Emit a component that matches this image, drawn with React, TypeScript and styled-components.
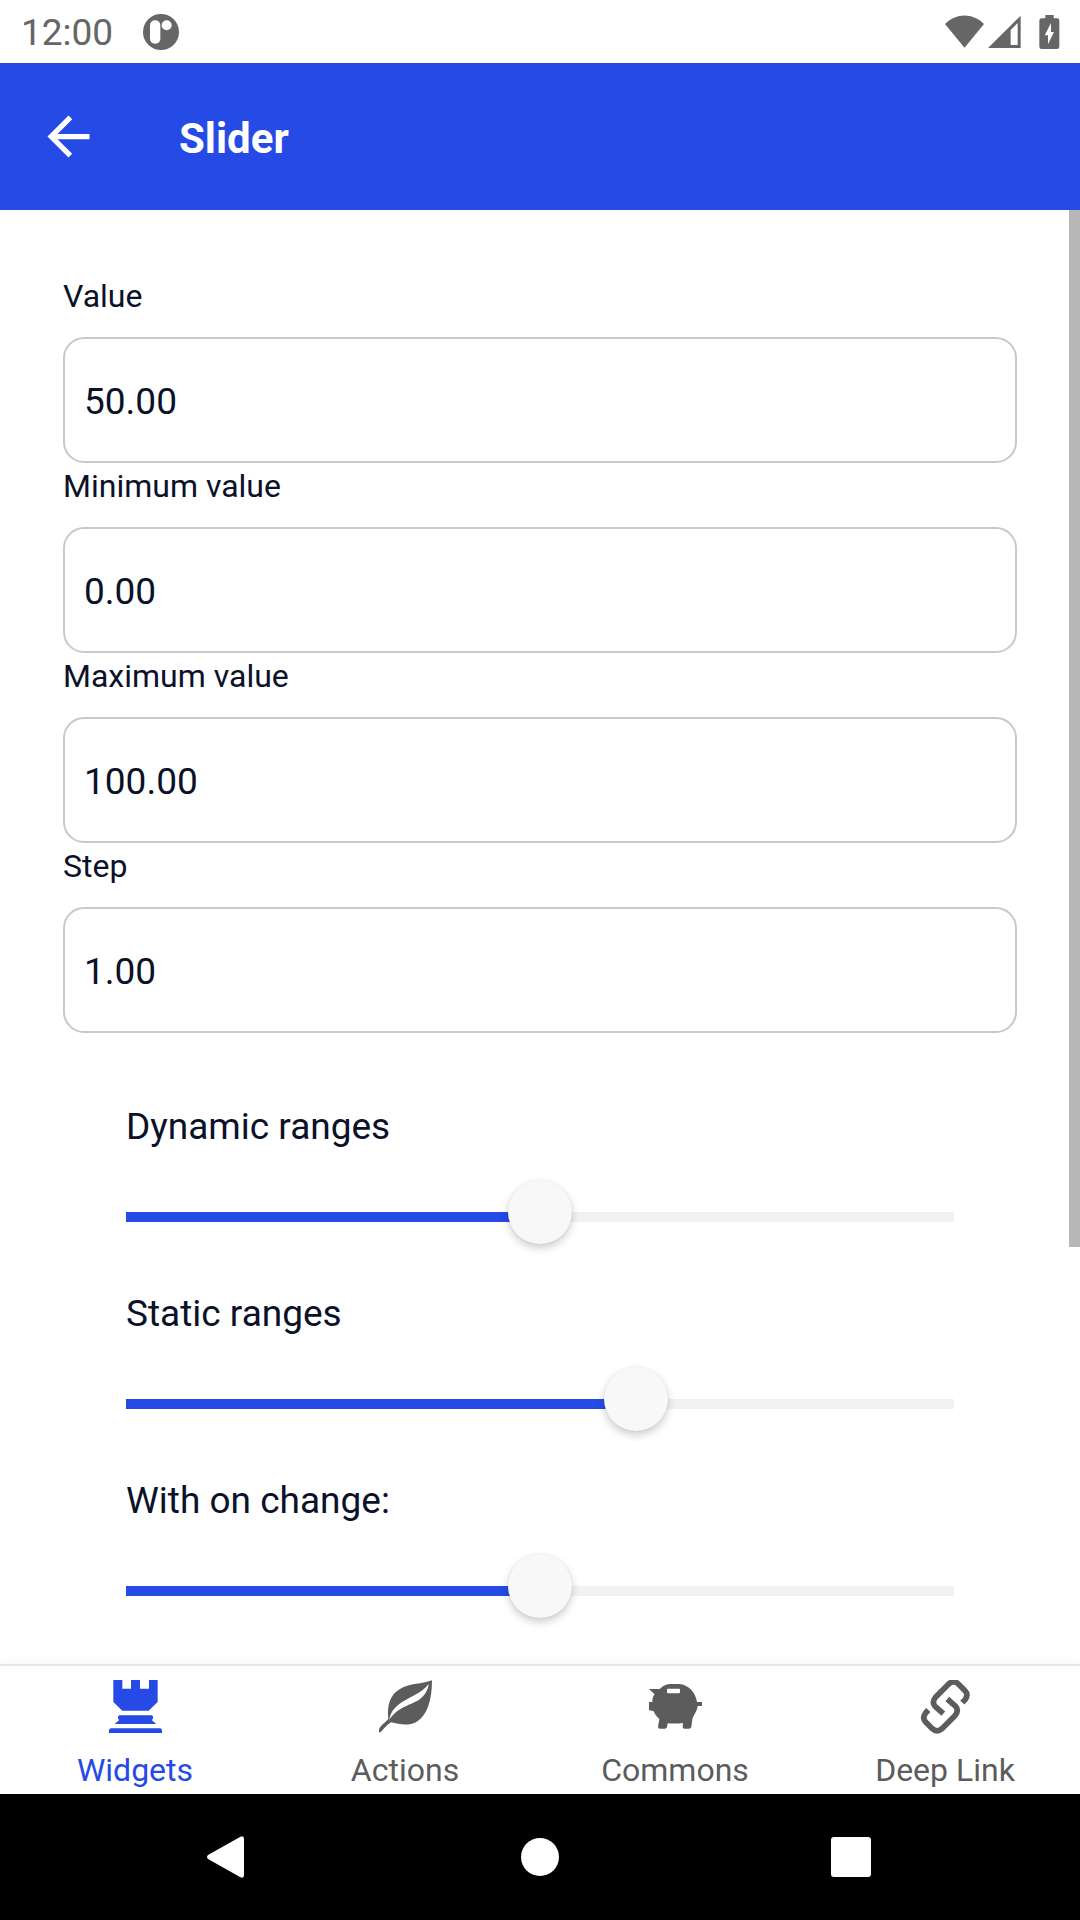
import React, { useState } from "react";
import styled, { createGlobalStyle } from "styled-components";

const blue = "#254ae6";
const ink = "#0a1128";
const grey = "#5c5c5c";

const GlobalStyle = createGlobalStyle`
  * { box-sizing: border-box; }
  body {
    margin: 0;
    background: #fff;
    color: ${ink};
    font-family: Roboto, "Noto Sans", sans-serif;
  }
  button, input { font: inherit; color: inherit; }
  button { border: 0; padding: 0; background: none; cursor: pointer; }
  svg { display: block; }
`;

const Screen = styled.div`
  display: flex;
  flex-direction: column;
  min-height: 100vh;
`;

const StatusBar = styled.div`
  display: flex;
  align-items: center;
  height: 63px;
  padding: 0 20px 0 21px;
  color: #666;
`;

const Clock = styled.time`
  flex: none;
  margin-right: 30px;
  padding-top: 2px;
  font-size: 37px;
  line-height: 44px;
`;

const StatusIcons = styled.div`
  display: flex;
  align-items: center;
  margin-left: auto;
  gap: 4px;
`;

const BatterySlot = styled.span`
  margin-left: 14px;
`;

const Header = styled.header`
  display: flex;
  align-items: center;
  gap: 79px;
  height: 147px;
  padding: 0 37px;
  background: ${blue};
  color: #fff;
`;

const Title = styled.h1`
  margin: 0;
  padding-top: 4px;
  font-size: 42px;
  line-height: 52px;
  font-weight: 700;
`;

const Content = styled.main`
  position: relative;
  flex: 1;
  padding: 63px 63px 32px;
`;

const ScrollThumb = styled.div`
  position: absolute;
  top: 0;
  right: 0;
  width: 11px;
  height: 71.3%;
  background: #b7b7b7;
`;

const FieldLabel = styled.label`
  display: block;
  margin-bottom: 18px;
  font-size: 32px;
  line-height: 46px;
`;

const FieldInput = styled.input`
  display: block;
  width: 100%;
  height: 126px;
  padding: 2px 19px 0;
  border: 2px solid #c9c9c9;
  border-radius: 21px;
  background: #fff;
  font-size: 37px;
  outline: none;
`;

const Sliders = styled.section`
  display: flex;
  flex-direction: column;
  gap: 69px;
  padding: 71px 63px 0;
`;

const SliderLabel = styled.label`
  display: block;
  margin-bottom: 62px;
  font-size: 37px;
  line-height: 46px;
`;

const Range = styled.input.attrs({ type: "range" })`
  display: block;
  appearance: none;
  width: 100%;
  height: 10px;
  margin: 0;
  background: #f2f2f2;
  outline: none;

  &::-webkit-slider-runnable-track {
    height: 10px;
  }

  &::-webkit-slider-thumb {
    appearance: none;
    width: 64px;
    height: 64px;
    margin-top: -32px;
    border-radius: 50%;
    background: #f8f8f8;
    box-shadow: 0 4px 8px rgba(0, 0, 0, 0.2), 0 0 2px rgba(0, 0, 0, 0.08);
  }
`;

const TabBar = styled.nav`
  display: grid;
  grid-template-columns: repeat(4, 1fr);
  height: 130px;
  border-top: 2px solid #e6e6e6;
  background: #fff;
  box-shadow: 0 -2px 10px rgba(0, 0, 0, 0.04);
`;

const Tab = styled.a<{ $active?: boolean }>`
  display: flex;
  flex-direction: column;
  align-items: center;
  gap: 15px;
  padding-top: 14px;
  color: ${(p) => (p.$active ? blue : grey)};
  font-size: 32px;
  line-height: 42px;
  text-decoration: none;
`;

const SystemNav = styled.div`
  display: flex;
  height: 126px;
  padding: 0 74px;
  background: #000;
  color: #fff;
`;

const SystemButton = styled.button`
  display: flex;
  flex: 1;
  align-items: center;
  justify-content: center;
`;

const AppBadge = () => (
  <svg width="36" height="36" viewBox="0 0 108 108" fill="currentColor" aria-hidden="true">
    <circle cx="54" cy="54" r="54" />
    <rect x="21" y="19" width="31" height="70" rx="15" fill="#fff" />
    <circle cx="71" cy="34" r="15" fill="#fff" />
  </svg>
);

const Wifi = () => (
  <svg width="39" height="34" viewBox="0 0 117 102" fill="currentColor" aria-hidden="true">
    <path d="M0 27C34-7 83-7 117 27L58.500 98Z" />
  </svg>
);

const Signal = () => (
  <svg width="33" height="34" viewBox="0 0 99 102" fill="currentColor" aria-hidden="true">
    <path fillRule="evenodd" d="M98 2V99H0ZM89 24L68 45V90H89Z" />
  </svg>
);

const Battery = () => (
  <svg width="21" height="34" viewBox="0 0 63 102" fill="currentColor" aria-hidden="true">
    <path
      fillRule="evenodd"
      d="M19 0H44V10H55Q61 10 61 17V95Q61 102 54 102H8Q1 102 1 95V17Q1 10 8 10H19ZM36 24L17 61H27V88L45 51H36Z"
    />
  </svg>
);

const BackArrow = () => (
  <svg width="63" height="63" viewBox="0 0 24 24" fill="currentColor" aria-hidden="true">
    <path d="M20 11H7.830l5.590-5.590L12 4l-8 8 8 8 1.410-1.410L7.830 13H20z" />
  </svg>
);

const TabIcon = ({ children }: { children: React.ReactNode }) => (
  <svg width="54" height="54" viewBox="0 0 162 162" fill="currentColor" aria-hidden="true">
    {children}
  </svg>
);

const rook = (
  <>
    <path d="M16 0H43V26H69V0H96V26H123V0H149V66L122 92H43L16 66Z" />
    <path d="M35 106H131Q135 106 135 111V116L131 120L145 132H20L34 120L30 116V111Q31 106 35 106Z" />
    <path d="M3 159V151Q4 145 9 145H156Q161 145 162 151V159Z" />
  </>
);

const leaf = (
  <path
    fillRule="evenodd"
    d="M162 1C120 14 96 10 66 27C38 42 26 74 31 117C23 127 4 139 3 149V157H8C16 148 28 133 39 127C65 133 90 139 115 126C147 108 162 62 162 1ZM152 12C151 25 144 43 127 56C103 75 61 78 34 119C37 103 41 91 61 74C90 51 129 43 152 12Z"
  />
);

const piggy = (
  <path
    fillRule="evenodd"
    d="M3 27H35C47 15 58 12 70 12H94C121 13 143 38 147 66H162V78H149C148 93 136 106 133 118L130 140Q129 146 123 146H109Q104 146 104 141L105 129Q82 132 59 130L57 141Q56 146 51 146H36Q30 146 30 140L34 117C25 109 21 104 17 94L3 90V66H13C13 56 15 49 20 43ZM60 26Q57 26 57 29V37Q57 40 60 40H93Q96 40 96 37V29Q96 26 93 26Z"
  />
);

const chain = (
  <g fill="none" stroke="currentColor" strokeWidth="17">
    <path d="M133 68L142 58Q152 43 141 32L121 12Q107 -1 92 12L54 50Q40 65 51 79L76 101" />
    <path d="M31 90L22 100Q12 115 23 126L43 146Q57 159 72 146L110 108Q124 93 113 79L88 57" />
  </g>
);

const fields = [
  { id: "value", label: "Value", value: "50.00" },
  { id: "minimum", label: "Minimum value", value: "0.00" },
  { id: "maximum", label: "Maximum value", value: "100.00" },
  { id: "step", label: "Step", value: "1.00" },
];

const sliders = [
  { id: "dynamic", label: "Dynamic ranges", value: 50 },
  { id: "static", label: "Static ranges", value: 62.5 },
  { id: "change", label: "With on change:", value: 50 },
];

const tabs = [
  { label: "Widgets", icon: rook },
  { label: "Actions", icon: leaf },
  { label: "Commons", icon: piggy },
  { label: "Deep Link", icon: chain },
];

function Slider({ id, label, initial }: { id: string; label: string; initial: number }) {
  const [value, setValue] = useState(initial);
  return (
    <div>
      <SliderLabel htmlFor={id}>{label}</SliderLabel>
      <Range
        id={id}
        min={0}
        max={100}
        step={0.5}
        value={value}
        onChange={(e) => setValue(Number(e.target.value))}
        style={{
          backgroundImage: `linear-gradient(to right, ${blue} ${value}%, transparent ${value}%)`,
        }}
      />
    </div>
  );
}

export default function App() {
  return (
    <Screen>
      <GlobalStyle />
      <StatusBar>
        <Clock>12:00</Clock>
        <AppBadge />
        <StatusIcons>
          <Wifi />
          <Signal />
          <BatterySlot>
            <Battery />
          </BatterySlot>
        </StatusIcons>
      </StatusBar>
      <Header>
        <button type="button" aria-label="Back">
          <BackArrow />
        </button>
        <Title>Slider</Title>
      </Header>
      <Content>
        {fields.map((f) => (
          <div key={f.id}>
            <FieldLabel htmlFor={f.id}>{f.label}</FieldLabel>
            <FieldInput id={f.id} inputMode="decimal" defaultValue={f.value} />
          </div>
        ))}
        <Sliders>
          {sliders.map((s) => (
            <Slider key={s.id} id={s.id} label={s.label} initial={s.value} />
          ))}
        </Sliders>
        <ScrollThumb />
      </Content>
      <TabBar>
        {tabs.map((t, i) => (
          <Tab key={t.label} href="#" $active={i === 0}>
            <TabIcon>{t.icon}</TabIcon>
            {t.label}
          </Tab>
        ))}
      </TabBar>
      <SystemNav>
        <SystemButton type="button" aria-label="System back">
          <svg width="44" height="44" viewBox="0 0 44 44" fill="currentColor">
            <path d="M1 20L33 2Q37 0 37 4V40Q37 44 33 42L1 24Q-1 22 1 20Z" />
          </svg>
        </SystemButton>
        <SystemButton type="button" aria-label="Home">
          <svg width="40" height="40" viewBox="0 0 40 40" fill="currentColor">
            <circle cx="20" cy="20" r="19" />
          </svg>
        </SystemButton>
        <SystemButton type="button" aria-label="Recent apps">
          <svg width="40" height="40" viewBox="0 0 40 40" fill="currentColor">
            <rect width="40" height="40" rx="3" />
          </svg>
        </SystemButton>
      </SystemNav>
    </Screen>
  );
}
